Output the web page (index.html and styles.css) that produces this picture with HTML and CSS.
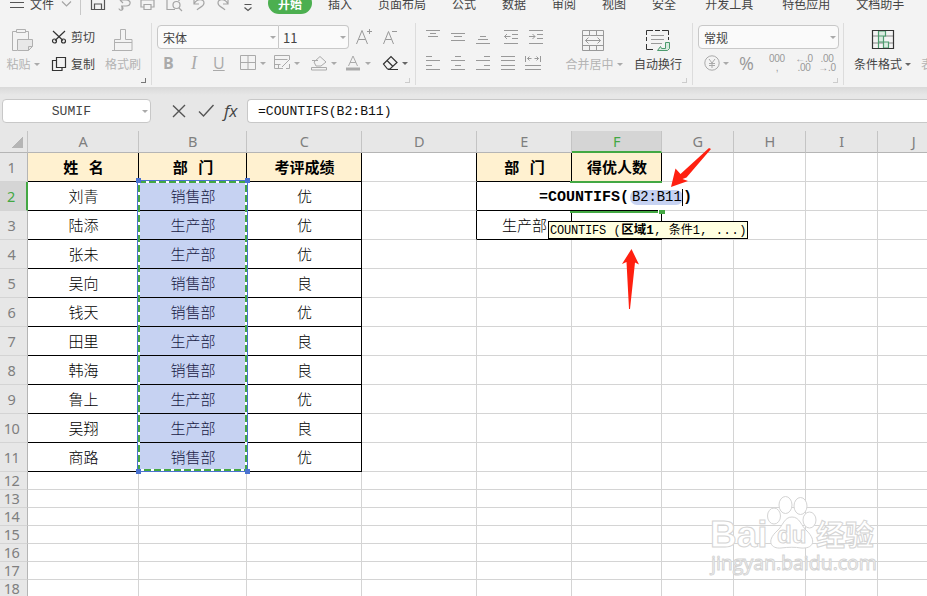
FILE: index.html
```html
<!DOCTYPE html>
<html lang="zh-CN">
  <head>
    <meta charset="UTF-8" />
    <meta name="viewport" content="width=device-width, initial-scale=1.0" />
    <title>COUNTIFS</title>
    <link rel="stylesheet" href="styles.css">
  </head>
  <body>
    <div class="menu">
      <svg class="menu-tools" width="30" height="24"><path d="M10 10.5h14M10 15.5h14M10 5.5h14" stroke="#555"/></svg>
      <span>文件</span>
      <svg class="quick" width="200" height="24" fill="none" stroke="#a5a5a5" stroke-width="1.2">
        <path d="M8 9.500l4.500 4.500 4.500-4.500"/>
        <path d="M26.500 0v23" stroke="#c8c8c8" stroke-width="1"/>
        <path d="M37.500 5v12.500h13V8l-3-3zM40.500 17v-5h7v5" stroke="#555"/>
        <path d="M66 8h6c6 0 5 6 0 6h-5M66 8l3-3M66 8l3 3M68 14v3.500M65 16.500a2 2 0 1 0 3-2"/>
        <path d="M90 15h-3V8h13v7h-3M90 12.500h7v5h-7zM90 8V4h7v4"/>
        <path d="M121 17.500h-8V4h12v5M125 16l3 3"/><circle cx="122.500" cy="13" r="3.500"/>
        <path d="M140 7v5h5M140 12c3-6 10-5 10-1 0 4-5 4-7 7"/>
        <path d="M174 7v5h-5M174 12c-3-6-10-5-10-1 0 4 5 4 7 7"/>
        <path d="M190.500 12.500h7M190.500 15.500l3.500 3 3.500-3" stroke="#555"/>
      </svg>
      <span class="tab-active">开始</span>
      <span class="tab">插入</span>
      <span class="tab">页面布局</span>
      <span class="tab">公式</span>
      <span class="tab">数据</span>
      <span class="tab">审阅</span>
      <span class="tab">视图</span>
      <span class="tab">安全</span>
      <span class="tab wide">开发工具</span>
      <span class="tab wide">特色应用</span>
      <span class="tab">文档助手</span>
    </div>

    <div class="ribbon">
      <div class="group clipboard">
        <div class="big off">
          <svg width="24" height="24" fill="none" stroke="#b0b0b0"><path d="M8 3.500H3.500v19H8M16 3.500h3.500V11M7.500 1.500h9v3h-9z"/><path d="M8.500 22.500v-11h15v7l-4 4zM19.500 22.500v-4h4" fill="#e8e8e8"/></svg>
          <span>粘贴<i class="caret"></i></span>
        </div>
        <div class="stack">
          <span><svg width="16" height="16" fill="none" stroke="#333" stroke-width="1.200"><path d="M2 2l10 9.500M14 2L4 11.500"/><circle cx="3.500" cy="12" r="2"/><circle cx="12.500" cy="12" r="2"/></svg>剪切</span>
          <span><svg width="16" height="16" fill="none" stroke="#333" stroke-width="1.200"><path d="M5.500 1.500h9v10h-9zM5 4.500H1.500v10H11v-3"/></svg>复制</span>
        </div>
        <div class="big off">
          <svg width="24" height="24" fill="none" stroke="#b0b0b0"><path d="M3.500 22.500V11.500H9.500V1.500h5v10h6.500v11M3.500 14.500H21M1 22.500h20"/></svg>
          <span>格式刷</span>
        </div>
        <i class="corner dark"></i>
      </div>

      <div class="group font">
        <div class="font-top">
          <div class="select">宋体<i class="caret"></i></div>
          <div class="select size">11<i class="caret"></i></div>
          <svg width="50" height="20" fill="none" stroke="#999"><path d="M2.500 17L8 3.500 13.500 17M4.500 12.500h7M13 4.500h5M15.500 2v5M29.500 17L34.500 4.500 39.500 17M31.500 12.500h6M38 4.500h5"/></svg>
        </div>
        <div class="font-bottom">
          <b class="off-letter">B</b><em class="off-letter">I</em><u class="off-letter">U</u>
          <svg width="16" height="16" fill="none" stroke="#aaa"><path d="M.5.5h15v14H.5zM8 .5v14M.5 7.500h15"/></svg><i class="caret"></i>
          <svg width="17" height="16" fill="none" stroke="#aaa"><path d="M15.500 5V.500H.500v13H9M.500 4.500h13M.500 9.500h6M4.500 9.500v4M8 12l7-7M12 13.500h3.500V9"/></svg><i class="caret"></i>
          <svg width="17" height="16" fill="none" stroke="#aaa"><path d="M3 7l6-5.500L15 7l-5 4H5zM1 5.500h6M.500 12.500h15v2.500H.500z"/></svg><i class="caret"></i>
          <svg width="15" height="16" fill="none" stroke="#aaa"><path d="M2.500 11L7 1l4.500 10M4 7.500h6"/><path d="M0 14h14" stroke-width="3"/></svg><i class="caret"></i>
          <svg width="17" height="16" fill="none" stroke="#333" stroke-width="1.200"><path d="M1.500 9L9 1.500l6 6-7 6.500H5.500zM5 5.500l6 6M6 14.500h10"/></svg><i class="caret dark"></i>
        </div>
        <i class="corner"></i>
      </div>

      <div class="group align">
        <svg width="120" height="48" fill="none" stroke="#999">
          <path d="M0 3.500h14M4 6.500h6M2 9.500h10M25 6.500h14M28 9.500h8M25 13.500h14M54 9.500h6M52 12.500h10M50 16.500h14"/>
          <path d="M78 3.500h14M86 7.500h6M86 11.500h6M78 16.500h14M78.500 9.500h6M81 7l-2.500 2.500L81 12"/>
          <path d="M103 3.500h14M111 7.500h6M111 11.500h6M103 16.500h14M103 9.500h6M106.500 7l2.500 2.500-2.500 2.500"/>
          <path d="M0 29.500h6M0 33.500h14M0 38.500h6M0 42.500h14M29 29.500h6M25 33.500h14M29 38.500h6M25 42.500h14M58 29.500h6M50 33.500h14M58 38.500h6M50 42.500h14M75 29.500h14M75 33.500h14M75 38.500h14M75 42.500h14"/>
          <path d="M99.500 29v6M114.500 29v6M101.500 31.500h4M108.500 31.500h4M103.500 29.500l-2 2 2 2M110.500 29.500l2 2-2 2M99 38.500h16M99 42.500h16"/>
        </svg>
        <div class="big off">
          <svg width="24" height="24" fill="none" stroke="#999"><path d="M1.500 2.500h21v20h-21zM1.500 7.500h21M1.500 17.500h21M8.500 2.500v5M15.500 2.500v5M8.500 17.500v5M15.500 17.500v5M4.500 12.500h15M7.500 9.500l-3 3 3 3M16.500 9.500l3 3-3 3"/></svg>
          <span>合并居中<i class="caret"></i></span>
        </div>
        <div class="big">
          <svg width="26" height="24" fill="none" stroke="#333"><path d="M1.500 7V2.500H8M17 2.500h6.500V7M1.500 16v5.500H8M10 2.500h5M1.500 9v4M23.500 9v3"/><path d="M6 7.500h13M6 11.500h13M6 15.500h11" stroke="#999"/><path d="M24.500 14.500v6l-2 2h-10l3-4 1 2h4v-6z" fill="#d7eadf" stroke="#4d9a6e"/></svg>
          <span>自动换行</span>
        </div>
        <i class="corner"></i>
      </div>

      <div class="group number">
        <div class="select">常规<i class="caret"></i></div>
        <div class="number-bottom">
          <svg width="16" height="16" fill="none" stroke="#aaa"><circle cx="8" cy="8" r="7.200"/><path d="M5 4l3 4 3-4M8 8v5M5 8.500h6M5 10.500h6"/></svg><i class="caret"></i>
          <span class="percent">%</span>
          <span class="decimals">000<br>,</span>
          <span class="decimals">←.0<br>.00</span>
          <span class="decimals">.00<br>→.0</span>
        </div>
        <i class="corner"></i>
      </div>

      <div class="group style">
        <div class="big">
          <svg width="24" height="24" fill="none" stroke="#333" stroke-width="1.200"><path d="M2 8h20M2 15h20" stroke="#888"/><path d="M7.500 3h7v5h-7zM7.500 8h5v6h-5zM12.500 14h5v6h-5zM7.500 14v6" stroke="#4d9a6e" fill="#dcece2"/><path d="M1.500 2.500h21v18h-21z"/></svg>
          <span>条件格式<i class="caret dark"></i></span>
        </div>
        <span class="cut-off">表格</span>
      </div>
    </div>

    <div class="formula-bar">
      <div class="name-box">SUMIF<i class="caret"></i></div>
      <svg width="44" height="16" fill="none" stroke="#555" stroke-width="1.400"><path d="M1 2.500l12 11.500M13 2L1 14M27 8.500l4.500 4.500L41.500 2"/></svg>
      <em class="fx">fx</em>
      <div class="formula">=COUNTIFS(B2:B11)</div>
    </div>

    <div class="sheet">
      <table>
        <colgroup>
          <col class="col-num"><col class="col-a"><col class="col-b"><col class="col-c"><col class="col-c"><col class="col-e"><col class="col-f"><col class="col-g"><col class="col-g"><col class="col-g"><col class="col-g">
        </colgroup>
        <tr class="letters"><th class="select-all"></th><th>A</th><th>B</th><th>C</th><th>D</th><th>E</th><th class="current">F</th><th>G</th><th>H</th><th>I</th><th>J</th></tr>
        <tr><th>1</th><td class="data title">姓 名</td><td class="data title">部 门</td><td class="data title">考评成绩</td><td class="edge"></td><td class="data title">部 门</td><td class="data title">得优人数</td><td></td><td></td><td></td><td></td></tr>
        <tr><th class="current">2</th><td class="data">刘青</td><td class="data range">销售部</td><td class="data">优</td><td class="edge"></td><td class="data"></td><td class="data"></td><td></td><td></td><td></td><td></td></tr>
        <tr><th>3</th><td class="data">陆添</td><td class="data range">生产部</td><td class="data">优</td><td class="edge"></td><td class="data">生产部</td><td class="data"></td><td></td><td></td><td></td><td></td></tr>
        <tr><th>4</th><td class="data">张未</td><td class="data range">生产部</td><td class="data">优</td><td></td><td></td><td></td><td></td><td></td><td></td><td></td></tr>
        <tr><th>5</th><td class="data">吴向</td><td class="data range">销售部</td><td class="data">良</td><td></td><td></td><td></td><td></td><td></td><td></td><td></td></tr>
        <tr><th>6</th><td class="data">钱天</td><td class="data range">销售部</td><td class="data">优</td><td></td><td></td><td></td><td></td><td></td><td></td><td></td></tr>
        <tr><th>7</th><td class="data">田里</td><td class="data range">生产部</td><td class="data">良</td><td></td><td></td><td></td><td></td><td></td><td></td><td></td></tr>
        <tr><th>8</th><td class="data">韩海</td><td class="data range">销售部</td><td class="data">良</td><td></td><td></td><td></td><td></td><td></td><td></td><td></td></tr>
        <tr><th>9</th><td class="data">鲁上</td><td class="data range">生产部</td><td class="data">优</td><td></td><td></td><td></td><td></td><td></td><td></td><td></td></tr>
        <tr><th>10</th><td class="data">吴翔</td><td class="data range">生产部</td><td class="data">良</td><td></td><td></td><td></td><td></td><td></td><td></td><td></td></tr>
        <tr><th>11</th><td class="data">商路</td><td class="data range">销售部</td><td class="data">优</td><td></td><td></td><td></td><td></td><td></td><td></td><td></td></tr>
        <tr class="short"><th>12</th><td></td><td></td><td></td><td></td><td></td><td></td><td></td><td></td><td></td><td></td></tr>
        <tr class="short"><th>13</th><td></td><td></td><td></td><td></td><td></td><td></td><td></td><td></td><td></td><td></td></tr>
        <tr class="short"><th>14</th><td></td><td></td><td></td><td></td><td></td><td></td><td></td><td></td><td></td><td></td></tr>
        <tr class="short"><th>15</th><td></td><td></td><td></td><td></td><td></td><td></td><td></td><td></td><td></td><td></td></tr>
        <tr class="short"><th>16</th><td></td><td></td><td></td><td></td><td></td><td></td><td></td><td></td><td></td><td></td></tr>
        <tr class="short"><th>17</th><td></td><td></td><td></td><td></td><td></td><td></td><td></td><td></td><td></td><td></td></tr>
        <tr class="short"><th>18</th><td></td><td></td><td></td><td></td><td></td><td></td><td></td><td></td><td></td><td></td></tr>
      </table>

      <!-- referenced range B2:B11 -->
      <svg class="ants" width="114" height="296" fill="none">
        <path d="M1.500 2.500h110v291h-110z" stroke="#4a72d0"/>
        <path d="M3 4h107v288H3z" stroke="#fff" stroke-width="2"/>
        <path d="M3 4h107v288H3z" stroke="#43a843" stroke-width="2" stroke-dasharray="7 3"/>
        <path d="M0 0h5v5H0zM109 0h5v5h-5zM0 291h5v5H0zM109 291h5v5h-5z" fill="#4a72d0"/>
      </svg>

      <div class="active-cell"></div>
      <div class="editor"><span class="fn">=COUNTIFS(</span><span class="ref">B2:B11</span><span class="close">)</span></div>
      <div class="tip"><span class="tip-name">COUNTIFS</span><span class="tip-open">(</span><b>区域1</b><span class="tip-arg">, 条件1</span><span>, ...)</span></div>

      <svg class="arrows" width="100" height="185" fill="#ff2010">
        <path d="M56 56l4.500-18.500 5 5.500L94 17l2 1-24.500 28.500-4 1.500 5.500 2z"/>
        <path d="M16.500 118l7.500 15.500-4-2-5 46.500h-1L11.500 131l-4.500 2z"/>
      </svg>

      <div class="watermark">
        <svg width="170" height="56" fill="#fff" stroke="#d4d4d4"><ellipse cx="64" cy="20" rx="6.500" ry="8"/><ellipse cx="75.500" cy="9" rx="6.500" ry="8.500"/><ellipse cx="90.500" cy="10" rx="6.500" ry="8.500"/><ellipse cx="99.500" cy="24" rx="6.500" ry="8"/><path d="M82 21c-8 0-9 9-15 14-11 10-6 18 4 17 8-1 14-1 20 0 12 1 16-7 6-17-6-5-7-14-15-14z"/></svg>
        <span class="wm-bai">Bai</span><span class="wm-du">du</span><span class="wm-cn">经验</span>
        <span class="wm-url">jingyan.baidu.com</span>
      </div>
    </div>
  </body>
</html>
```

FILE: styles.css
```css
* {
  box-sizing: border-box;
}
body {
  margin: 0;
  width: 927px;
  height: 596px;
  overflow: hidden;
  background-color: #e7e7e7;
  font-family: "Noto Sans CJK SC", sans-serif;
  font-size: 12px;
  color: #444;
}
svg {
  display: block;
  flex: none;
}
.menu {
  display: flex;
  height: 23px;
  margin-top: -8px;
  line-height: 24px;
  white-space: nowrap;
  background-color: #f3f3f3;
}
.quick {
  margin-right: 14px;
}
.tab-active {
  width: 44px;
  height: 22px;
  margin-right: -10px;
  border-radius: 11px;
  background-color: #4caf50;
  color: white;
  font-weight: bold;
  text-align: center;
}
.tab {
  margin-left: 26px;
}
.tab.wide {
  margin-left: 29px;
}

/* ribbon */
.ribbon {
  display: flex;
  height: 72px;
  padding-top: 8px;
  background-color: #f3f3f3;
}
.group {
  position: relative;
  flex: none;
  height: 62px;
  border-right: 1px solid #dcdcdc;
}
.clipboard {
  display: flex;
  width: 152px;
}
.font {
  width: 264px;
}
.align {
  display: flex;
  width: 277px;
}
.number {
  width: 151px;
}
.style {
  display: flex;
  width: 83px;
  border: none;
}
.big {
  display: flex;
  flex-direction: column;
  align-items: center;
  padding-top: 5px;
  white-space: nowrap;
}
.big span {
  height: 24px;
  line-height: 24px;
}
.clipboard .big:first-child {
  width: 46px;
}
.clipboard .big:first-child svg {
  margin-left: -4px;
}
.clipboard .big {
  width: 42px;
}
.off {
  color: #b4b4b4;
}
.stack {
  display: flex;
  flex-direction: column;
  width: 56px;
  padding-left: 5px;
}
.stack span {
  display: flex;
  align-items: center;
  gap: 4px;
  height: 27px;
  white-space: nowrap;
}
.caret {
  display: inline-block;
  align-self: center;
  justify-self: start;
  width: 6px;
  height: 3px;
  margin-left: 3px;
  border: 3px solid transparent;
  border-top-color: #aaa;
  border-bottom: none;
  vertical-align: 3px;
}
.caret.dark {
  border-top-color: #666;
}
.corner {
  position: absolute;
  right: 5px;
  bottom: 2px;
  width: 5px;
  height: 5px;
  border-right: 1px solid #ccc;
  border-bottom: 1px solid #ccc;
}
.corner.dark {
  border-color: #777;
}
.select {
  display: flex;
  justify-content: space-between;
  align-items: center;
  width: 122px;
  height: 24px;
  padding: 0 2px 0 5px;
  border: 1px solid #c8c8c8;
  border-radius: 4px 0 0 4px;
  background-color: #fafafa;
}
.select.size {
  width: 70px;
  padding-left: 4px;
  border-left: none;
  border-radius: 0 4px 4px 0;
  font-size: 13px;
}
.number .select {
  width: 141px;
  margin: 2px 0 0 5px;
  border-radius: 4px;
}
.font-top {
  display: flex;
  align-items: center;
  padding: 2px 0 0 5px;
}
.font-top svg {
  margin-left: 5px;
}
.font-bottom {
  display: grid;
  grid-template-columns: 24px 26px 27px 17px 17px 17px 20px 17px 18px 16px 20px 17px 10px;
  align-items: center;
  height: 28px;
  padding-left: 11px;
}
.off-letter {
  font: 16px "Open Sans", sans-serif;
  color: #aaa;
}
b.off-letter {
  font-weight: bold;
}
em.off-letter {
  padding-left: 4px;
  font-family: "Liberation Serif", serif;
  font-style: italic;
  font-size: 18px;
}
u.off-letter {
  line-height: 18px;
}
.align > svg {
  margin: 4px 0 0 10px;
}
.align .big {
  width: 60px;
  margin-left: 18px;
}
.align .big + .big {
  width: 50px;
  margin-left: 9px;
}
.align .big.off svg {
  margin-left: -2px;
}
.number-bottom {
  display: grid;
  grid-template-columns: 16px 19px 23px 30px 24px 22px;
  align-items: center;
  height: 28px;
  padding-left: 11px;
  color: #999;
}
.percent {
  font: 18px "Open Sans", sans-serif;
}
.decimals {
  font: 10px/9px "Liberation Sans", sans-serif;
  letter-spacing: -0.3px;
  text-align: center;
  white-space: nowrap;
}
.style .big {
  width: 58px;
  margin-left: 10px;
}
.cut-off {
  margin: 29px 0 0 10px;
  line-height: 24px;
  color: #b4b4b4;
  white-space: nowrap;
}

/* formula bar */
.formula-bar {
  display: flex;
  align-items: center;
  height: 44px;
  padding: 4px 0 0 2px;
  background: linear-gradient(#d9d9d9, #e7e7e7 8px);
  font-family: "Liberation Mono", monospace;
  font-size: 13.1px;
}
.name-box {
  display: flex;
  align-items: center;
  justify-content: flex-end;
  width: 149px;
  height: 24px;
  padding: 1px 2px 0 0;
  border: 1px solid #c8c8c8;
  border-radius: 4px;
  background-color: white;
}
.name-box .caret {
  margin-left: 51px;
}
.formula-bar svg {
  margin-left: 21px;
}
.fx {
  width: 31px;
  padding-left: 8px;
  font: italic 17px/20px "Open Sans", sans-serif;
}
.formula {
  flex: 1;
  height: 24px;
  padding-left: 10px;
  border: 1px solid #c8c8c8;
  border-right: none;
  border-radius: 4px 0 0 4px;
  background-color: white;
  color: #111;
  line-height: 24px;
}

/* sheet */
.sheet {
  position: relative;
  width: 927px;
  height: 465px;
  overflow: hidden;
}
table {
  table-layout: fixed;
  width: 950px;
  border-spacing: 0;
  background-color: white;
}
.col-num { width: 28px; }
.col-a { width: 111px; }
.col-b { width: 108px; }
.col-c { width: 115px; }
.col-e { width: 95px; }
.col-f { width: 90px; }
.col-g { width: 72px; }
th,
td {
  height: 29px;
  padding: 0;
  border-right: 1px solid #d4d4d4;
  border-bottom: 1px solid #d4d4d4;
  text-align: center;
  line-height: 20px;
  white-space: nowrap;
}
th {
  padding: 0 4px 1px 0;
  border-right-color: #b5b5b5;
  background-color: #e7e7e7;
  color: #7f7f7f;
  font: 14.5px/16px "Noto Sans", sans-serif;
  letter-spacing: -0.5px;
}
.letters th {
  height: 22px;
  padding: 0 0 2px;
  border-bottom-color: #b5b5b5;
  border-right-color: #c4c4c4;
}
.letters .select-all {
  background: linear-gradient(135deg, transparent 50%, #b5b5b5 50%) 12px 6px / 11px 11px no-repeat #e7e7e7;
}
th.current {
  border-right: 2px solid #43a843;
  background-color: #d5d5d5;
  color: #43a843;
}
.letters th.current {
  padding-bottom: 1px;
  border-right: 1px solid #c4c4c4;
  border-bottom: 2px solid #43a843;
}
.short th,
.short td {
  height: 18px;
}
.short th {
  line-height: 15px;
}
.data {
  padding: 0 0 1px 1px;
  border-color: #000;
  color: #000;
  font-size: 15px;
  font-weight: 300;
}
.edge {
  border-right-color: #000;
}
.title {
  background-color: #fff1d0;
  font-weight: bold;
  word-spacing: 7px;
}
.range {
  background-color: #c6d2f2;
  color: #182045;
}
.ants {
  position: absolute;
  left: 136px;
  top: 47px;
}
.active-cell {
  position: absolute;
  left: 570px;
  top: 50px;
  width: 92px;
  height: 32px;
  border-top: 2px solid #43a843;
  border-bottom: 2px solid #43a843;
}
.active-cell::after {
  content: "";
  position: absolute;
  right: -3px;
  bottom: -3px;
  width: 6px;
  height: 5px;
  border: 1px solid white;
  border-width: 1px 0 0 1px;
  background-color: #43a843;
}
.editor {
  position: absolute;
  left: 477px;
  top: 52px;
  display: flex;
  align-items: center;
  width: 214px;
  height: 27px;
  padding: 1px 0 0 62px;
  background-color: white;
  color: #000;
  font-family: "Liberation Mono", monospace;
  font-size: 15px;
}
.fn {
  width: 91px;
  font-weight: bold;
}
.ref {
  width: 53px;
  height: 15px;
  padding-left: 2px;
  border-radius: 7px;
  background-color: #c6d2f2;
  font-size: 13.8px;
  line-height: 15px;
}
.close {
  width: 8px;
  margin-left: -1px;
  border-left: 1px solid #000;
  font-weight: bold;
  line-height: 17px;
}
.tip {
  position: absolute;
  left: 548px;
  top: 90px;
  display: flex;
  width: 200px;
  height: 18px;
  padding: 1px 0 0 1px;
  border: 1px solid #000;
  background-color: #ffffe1;
  color: #000;
  font: 12px/16px "Liberation Mono", "Noto Sans CJK SC", monospace;
  white-space: pre;
}
.tip-name {
  width: 65px;
  letter-spacing: -0.2px;
}
.tip-open {
  width: 8px;
}
.tip b {
  width: 34px;
  font-size: 12.5px;
}
.tip-arg {
  width: 47px;
}
.tip span:last-child {
  letter-spacing: 0.6px;
}
.arrows {
  position: absolute;
  left: 615px;
  top: 0;
}

/* watermark */
.watermark {
  position: absolute;
  left: 710px;
  top: 365px;
  width: 170px;
  height: 80px;
  color: white;
  font-family: "Liberation Sans", "Noto Sans CJK SC", sans-serif;
  font-weight: bold;
  -webkit-text-stroke: 1px #d4d4d4;
}
.watermark span {
  position: absolute;
  line-height: 40px;
}
.wm-bai {
  left: 0;
  top: 19px;
  font-size: 37px;
}
.wm-du {
  left: 67px;
  top: 19px;
  font-size: 24px;
}
.wm-cn {
  left: 106px;
  top: 20px;
  font-size: 29px;
}
.wm-url {
  left: 1px;
  top: 47px;
  font-family: "Open Sans", sans-serif;
  font-size: 19.5px;
  font-weight: normal;
}
```
